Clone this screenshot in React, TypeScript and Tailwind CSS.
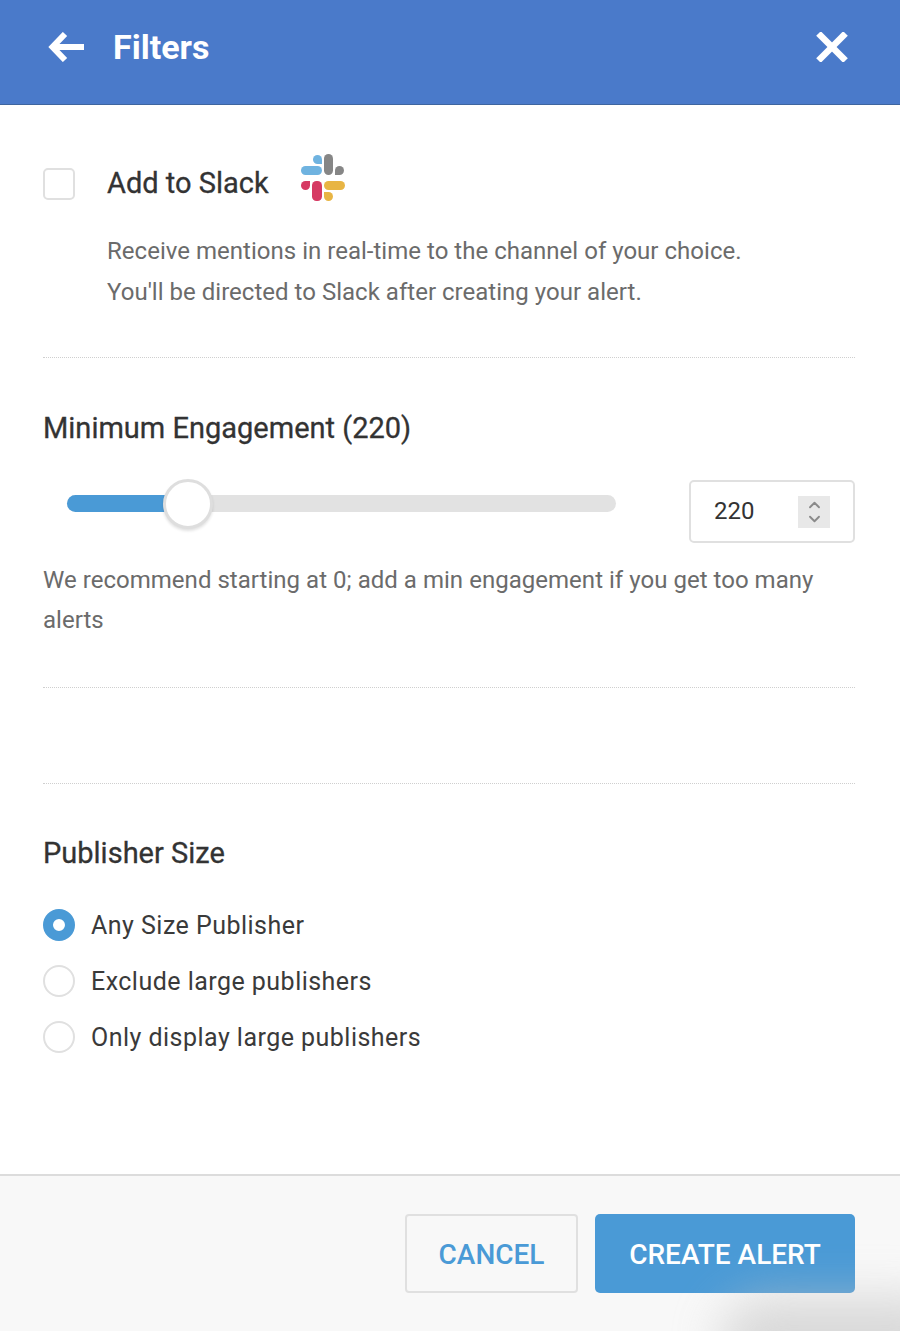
import React from 'react';
import { ChevronUp, ChevronDown } from 'lucide-react';

const BackArrow = () => (
  <svg width="36" height="30" viewBox="0 0 36 30" fill="none" stroke="currentColor" strokeWidth="6">
    <path d="M5 15 H36" />
    <path d="M17 2 L4.5 15 L17 28" />
  </svg>
);

const CloseIcon = () => (
  <svg width="32" height="30" viewBox="0 0 32 30" fill="none" stroke="currentColor" strokeWidth="6.5">
    <path d="M2.5 1.5 L29.5 28.5" />
    <path d="M29.5 1.5 L2.5 28.5" />
  </svg>
);

const SlackLogo = () => (
  <svg width="46" height="48" viewBox="0 0 46 48" fill="none" className="mb-[12px]">
    <rect x="1" y="12" width="21" height="9" rx="4.5" fill="#6fb3e0" />
    <path d="M22 10 h-4.5 a4.5 4.5 0 1 1 4.5 -4.5 Z" fill="#6fb3e0" />
    <rect x="24" y="0" width="9" height="21" rx="4.5" fill="#868686" />
    <path d="M35 21 v-4.5 a4.5 4.5 0 1 1 4.5 4.5 Z" fill="#868686" />
    <rect x="24" y="27" width="21" height="9" rx="4.5" fill="#e8b544" />
    <path d="M24 38 h4.5 a4.5 4.5 0 1 1 -4.5 4.5 Z" fill="#e8b544" />
    <rect x="12" y="27" width="10" height="20" rx="4.5" fill="#d63a63" />
    <path d="M10 27 v4.5 a4.5 4.5 0 1 1 -4.5 -4.5 Z" fill="#d63a63" />
  </svg>
);

const Divider = () => <div className="border-t border-dotted border-[#cfcfcf]" />;

const Radio = ({ label, checked }: { label: string; checked?: boolean }) => (
  <div className="flex items-center h-[32px] gap-4">
    {checked ? (
      <span className="w-8 h-8 rounded-full border-[10px] border-[#4a9ad6] bg-white" />
    ) : (
      <span className="w-8 h-8 rounded-full border-2 border-[#e0e0e0] bg-white" />
    )}
    <span className="text-[25px] leading-8 pt-[1px] text-[#3a3a3a] tracking-[0.47px]">{label}</span>
  </div>
);

export default function App() {
  return (
    <div className="relative w-[900px] h-[1331px] bg-white flex flex-col overflow-hidden font-['Roboto',sans-serif]">
      <header className="h-[105px] shrink-0 bg-[#4a7aca] border-b border-[#3e659f] flex items-center justify-between pl-[48px] pr-[52px] pb-[10px] text-white">
        <div className="flex items-center gap-[29px]">
          <BackArrow />
          <h1 className="text-[34px] font-bold">Filters</h1>
        </div>
        <CloseIcon />
      </header>

      <main className="flex-1 px-[43px] pr-[45px]">
        <section className="h-[252px] pt-[52px]">
          <div className="flex items-center h-[54px]">
            <span className="w-8 h-8 rounded-[5px] border-2 border-[#e0e0e0] bg-white mr-8" />
            <span className="text-[29px] text-[#333] [-webkit-text-stroke:0.3px] mr-[31px]">Add to Slack</span>
            <SlackLogo />
          </div>
          <div className="pl-16 mt-[20px] text-[24px] leading-[41px] text-[#6b6b6b] tracking-[0.02px]">
            <p>Receive mentions in real-time to the channel of your choice.</p>
            <p>You'll be directed to Slack after creating your alert.</p>
          </div>
        </section>
        <Divider />

        <section className="h-[329px] pt-[50px]">
          <h2 className="text-[29px] [-webkit-text-stroke:0.3px] leading-[40px] text-[#333]">Minimum Engagement (220)</h2>
          <div className="flex items-center justify-between mt-[32px] pl-6">
            <div className="relative w-[549px] h-[17px] mb-4 rounded-full bg-[#e2e2e2]">
              <div className="h-full w-[120px] rounded-full bg-[#4a9ad6]" />
              <div className="absolute left-[96px] top-[-16px] w-[50px] h-[50px] rounded-full bg-white border-[3px] border-[#dedede] shadow-[0_2px_3px_rgba(0,0,0,0.12)]" />
            </div>
            <div className="w-[166px] h-[63px] rounded-[5px] border-2 border-[#e0e0e0] flex items-center justify-between pl-[23px] pr-[23px]">
              <span className="text-[24px] text-[#333] pb-[2px]">220</span>
              <span className="w-8 h-8 bg-[#e8e8e8] flex flex-col items-center justify-center text-[#8a8a8a]">
                <ChevronUp size={19} strokeWidth={2.5} className="-mb-[2px]" />
                <ChevronDown size={19} strokeWidth={2.5} className="-mt-[2px]" />
              </span>
            </div>
          </div>
          <p className="mt-[17px] text-[24px] leading-[40px] text-[#6b6b6b] tracking-[0.03px]">
            We recommend starting at 0; add a min engagement if you get too many alerts
          </p>
        </section>
        <Divider />

        <div className="h-[95px]" />
        <Divider />

        <section className="pt-[49px]">
          <h2 className="text-[29px] [-webkit-text-stroke:0.3px] leading-[40px] text-[#333]">Publisher Size</h2>
          <div className="flex flex-col gap-6 mt-[36px]">
            <Radio label="Any Size Publisher" checked />
            <Radio label="Exclude large publishers" />
            <Radio label="Only display large publishers" />
          </div>
        </section>
      </main>

      <footer className="h-[157px] shrink-0 bg-[#f8f8f8] border-t-2 border-[#dcdcdc] flex justify-end gap-[17px] pt-[38px] pr-[45px]">
        <button className="w-[173px] h-[79px] pt-[2px] rounded-[4px] border-2 border-[#e0e0e0] text-[28px] font-medium text-[#4a9ad6]">CANCEL</button>
        <button className="w-[260px] h-[79px] pt-[2px] rounded-[5px] bg-[#4a9ad6] text-[28px] font-medium text-white">CREATE ALERT</button>
      </footer>

      <div className="absolute -right-[60px] -bottom-[56px] w-[240px] h-[90px] rounded-full bg-[#c4c4c4] opacity-60 blur-[24px] pointer-events-none" />
    </div>
  );
}
